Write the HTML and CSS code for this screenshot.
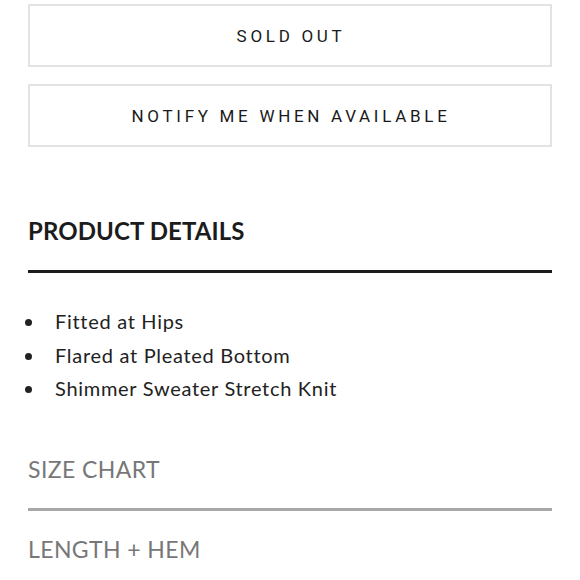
FILE: index.html
```html
<!DOCTYPE html>
<html>
<head>
<meta charset="utf-8">
<link rel="stylesheet" href="styles.css">
</head>
<body>
<div class="page">
  <div class="btn">SOLD OUT</div>
  <div class="btn">NOTIFY ME WHEN AVAILABLE</div>
  <h2 class="details-title">PRODUCT DETAILS</h2>
  <ul class="details-list">
    <li>Fitted at Hips</li>
    <li>Flared at Pleated Bottom</li>
    <li>Shimmer Sweater Stretch Knit</li>
  </ul>
  <div class="tab tab-first">SIZE CHART</div>
  <div class="tab">LENGTH + HEM</div>
</div>
</body>
</html>
```
FILE: styles.css
```css
* { box-sizing: border-box; }
html, body { margin: 0; padding: 0; background: #fff; }
.page {
  padding: 4px 28px 0 28px;
  width: 580px;
  display: flex;
  flex-direction: column;
}
.btn {
  height: 63px;
  border: 2px solid #e3e3e3;
  display: flex;
  align-items: center;
  justify-content: center;
  font-family: Roboto, "Liberation Sans", sans-serif;
  font-size: 17px;
  letter-spacing: 3.7px;
  color: #1a1a1a;
  padding-left: 2px;
}
.btn + .btn { margin-top: 17px; }
.details-title {
  margin: 69px 0 0 0;
  font-family: Lato, "Noto Sans", sans-serif;
  font-weight: 700;
  font-size: 24px;
  line-height: 30px;
  letter-spacing: 0.1px;
  color: #1c1c1c;
  padding-bottom: 24px;
  border-bottom: 3px solid #1c1c1c;
}
.details-list {
  margin: 32px 0 0 0;
  padding: 0;
  list-style: none;
  font-family: Lato, "Noto Sans", sans-serif;
  font-size: 20px;
  line-height: 33.5px;
  letter-spacing: 0.7px;
  color: #222;
}
.details-list li {
  display: flex;
  align-items: center;
}
.details-list li::before {
  content: "";
  width: 7px;
  height: 7px;
  border-radius: 50%;
  background: #222;
  margin: 2px 23px 0 -3px;
  flex: none;
}
.tab {
  font-family: Lato, "Noto Sans", sans-serif;
  font-size: 23px;
  letter-spacing: 0.4px;
  color: #777;
  line-height: 30px;
}
.tab-first {
  margin-top: 48px;
  padding-bottom: 24px;
  border-bottom: 3px solid #a8a8a8;
}
.tab-first + .tab { margin-top: 23px; }
```
